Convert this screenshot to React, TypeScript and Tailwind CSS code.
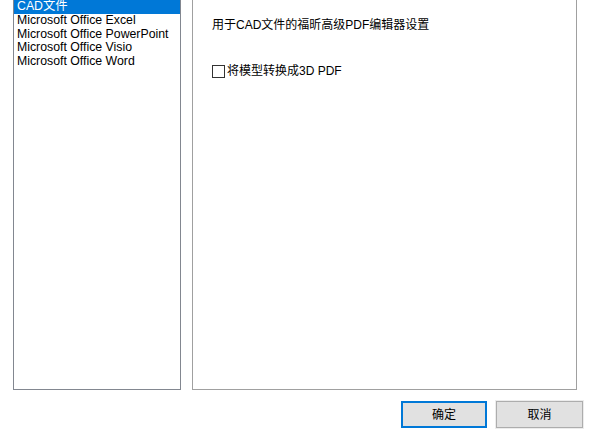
import React, { useState } from 'react';

const items = ['CAD文件', 'Microsoft Office Excel', 'Microsoft Office PowerPoint', 'Microsoft Office Visio', 'Microsoft Office Word'];

const font = "font-['Liberation_Sans','Noto_Sans_CJK_SC',sans-serif]";

export default function App() {
    const [selected, setSelected] = useState(0);
    const [convert3d, setConvert3d] = useState(false);

    return (
        <div className={`w-[600px] h-[444px] bg-white overflow-hidden text-[12px] text-black ${font}`}>
            <div className="flex gap-[11px] pl-[13px] -mt-px">
                <div className="w-[168px] h-[391px] border border-[#828790] bg-white text-[12.3px]">
                    {items.map((item, i) => (
                        <div
                            key={item}
                            onClick={() => setSelected(i)}
                            className={`h-[13.75px] leading-[13.75px] pl-[3px] whitespace-nowrap ${
                                selected === i ? 'bg-[#0078d7] text-white' : ''
                            }`}
                        >
                            {item}
                        </div>
                    ))}
                </div>
                <div className="w-[385px] h-[391px] border border-[#a0a0a0] bg-white pl-[19px] pt-[17px]">
                    <div className="leading-[16px]">用于CAD文件的福昕高级PDF编辑器设置</div>
                    <label className="flex items-center mt-[30px] gap-[2px] cursor-default">
                        <span
                            onClick={() => setConvert3d(!convert3d)}
                            className="w-[13px] h-[13px] border border-[#333333] bg-white flex items-center justify-center text-[10px] leading-none"
                        >
                            {convert3d ? '✓' : ''}
                        </span>
                        <span className="leading-[16px]">将模型转换成3D PDF</span>
                    </label>
                </div>
            </div>
            <div className="flex justify-end gap-[9px] pr-[17px] mt-[11px]">
                <button className="w-[86px] h-[27px] bg-[#e1e1e1] border-2 border-[#0078d7] leading-none">确定</button>
                <button className="w-[87px] h-[27px] bg-[#e1e1e1] border border-[#adadad] outline outline-1 outline-[#ececec] leading-none">取消</button>
            </div>
        </div>
    );
}
